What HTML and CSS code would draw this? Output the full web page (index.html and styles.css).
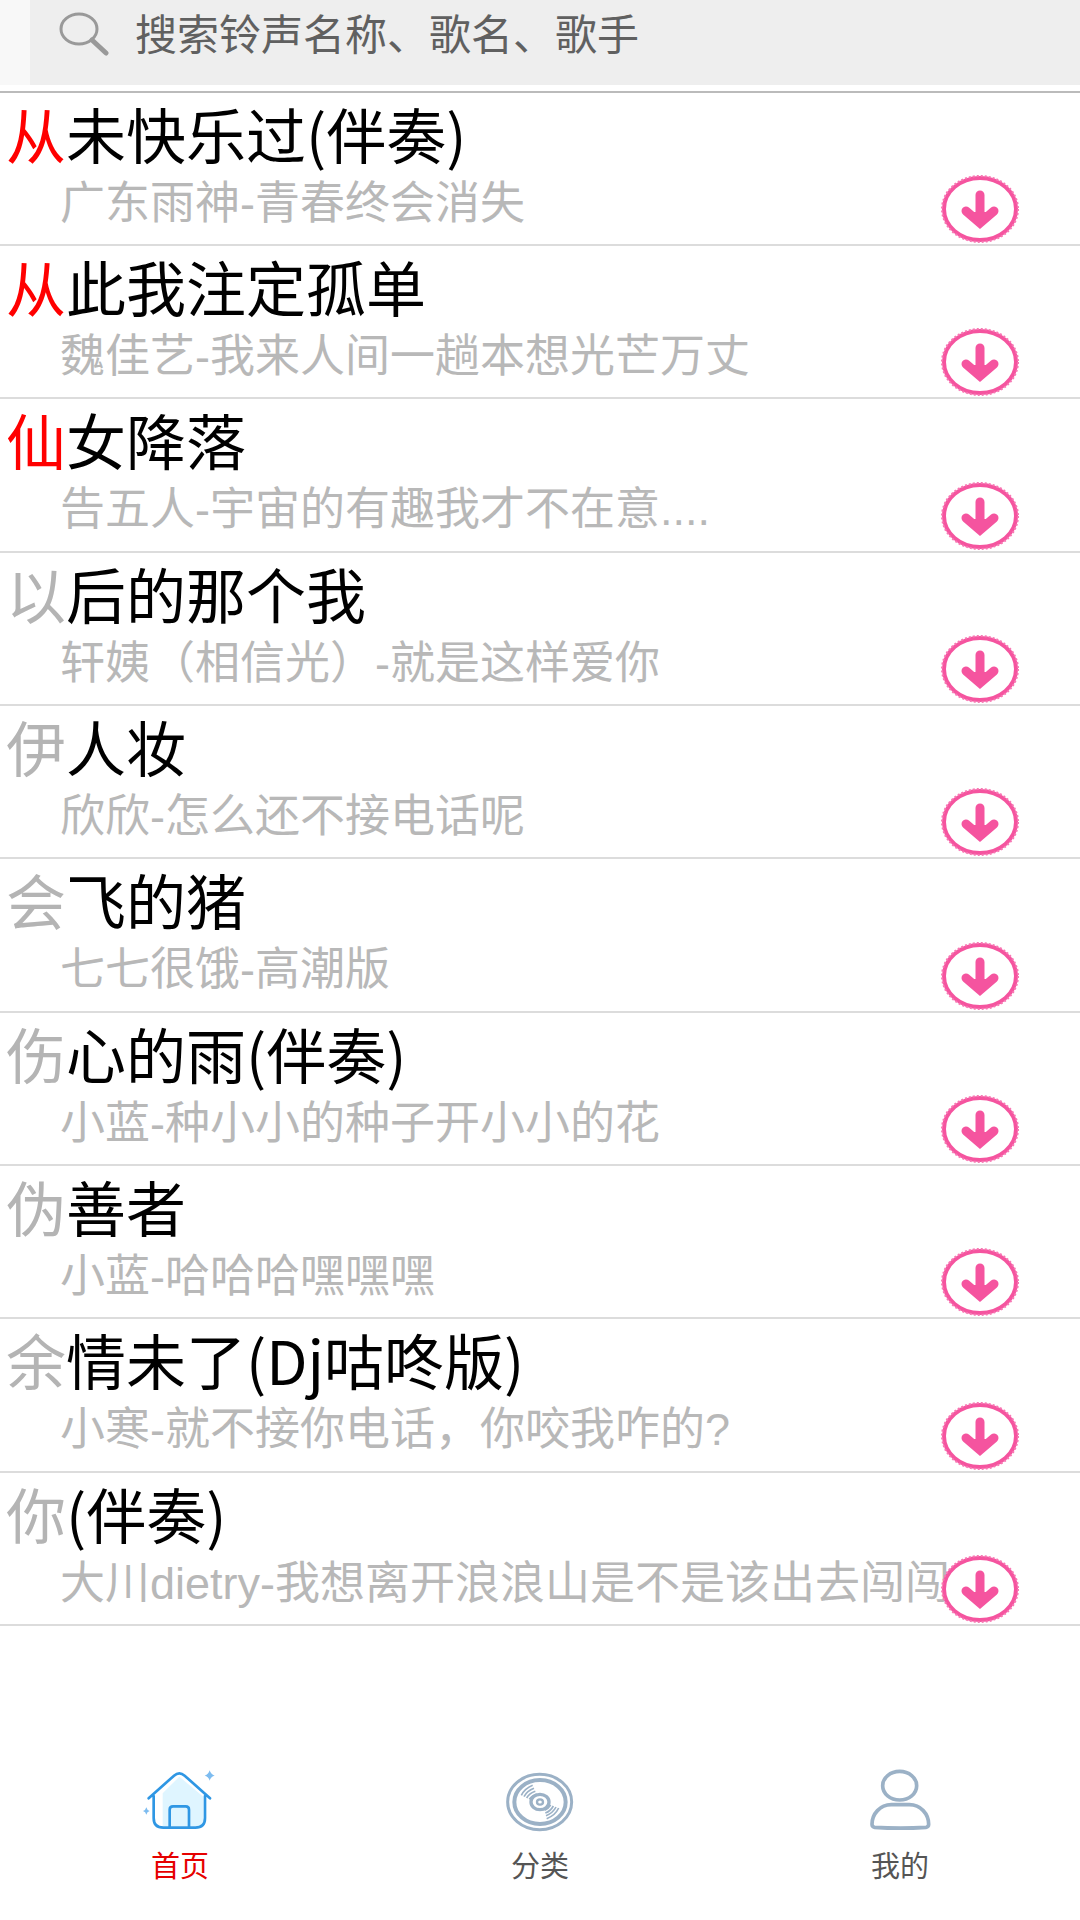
FILE: index.html
```html
<!DOCTYPE html>
<html lang="zh-CN">
<head>
<meta charset="utf-8">
<meta name="viewport" content="width=device-width, initial-scale=1">
<title>铃声</title>
<link rel="stylesheet" href="styles.css">
</head>
<body>
<svg class="defs" aria-hidden="true">
  <symbol id="download" viewBox="0 0 78 68">
    <ellipse cx="39" cy="34" rx="36" ry="31" fill="#fff" stroke="#f5549f" stroke-width="4"/>
    <ellipse cx="39" cy="34" rx="38" ry="33" fill="none" stroke="#f777b3" stroke-width="2" stroke-dasharray="2 2"/>
    <path d="M39 20v27M25 36l14 12 14-12" fill="none" stroke="#f5549f" stroke-width="9" stroke-linecap="round" stroke-linejoin="miter"/>
    <path d="M27 37h24L39 50z" fill="#f5549f"/>
  </symbol>
</svg>
<header class="header">
  <form class="search" role="search">
    <svg class="search-icon" viewBox="0 0 50 46" aria-hidden="true">
      <ellipse cx="20" cy="17" rx="18" ry="15" fill="none" stroke="#999" stroke-width="3"/>
      <path d="M33 28l14 13" stroke="#999" stroke-width="5" stroke-linecap="round"/>
    </svg>
    <input class="search-input" type="text" aria-label="搜索" placeholder="搜索铃声名称、歌名、歌手">
  </form>
</header>
<main>
  <ol class="songs">
    <li class="song"><div class="info"><h2 class="title"><span class="top">从</span>未快乐过(伴奏)</h2><p class="artist">广东雨神-青春终会消失</p></div><button class="download" aria-label="下载"><svg><use href="#download"/></svg></button></li>
    <li class="song"><div class="info"><h2 class="title"><span class="top">从</span>此我注定孤单</h2><p class="artist">魏佳艺-我来人间一趟本想光芒万丈</p></div><button class="download" aria-label="下载"><svg><use href="#download"/></svg></button></li>
    <li class="song"><div class="info"><h2 class="title"><span class="top">仙</span>女降落</h2><p class="artist">告五人-宇宙的有趣我才不在意....</p></div><button class="download" aria-label="下载"><svg><use href="#download"/></svg></button></li>
    <li class="song"><div class="info"><h2 class="title"><span class="rest">以</span>后的那个我</h2><p class="artist">轩姨（相信光）-就是这样爱你</p></div><button class="download" aria-label="下载"><svg><use href="#download"/></svg></button></li>
    <li class="song"><div class="info"><h2 class="title"><span class="rest">伊</span>人妆</h2><p class="artist">欣欣-怎么还不接电话呢</p></div><button class="download" aria-label="下载"><svg><use href="#download"/></svg></button></li>
    <li class="song"><div class="info"><h2 class="title"><span class="rest">会</span>飞的猪</h2><p class="artist">七七很饿-高潮版</p></div><button class="download" aria-label="下载"><svg><use href="#download"/></svg></button></li>
    <li class="song"><div class="info"><h2 class="title"><span class="rest">伤</span>心的雨(伴奏)</h2><p class="artist">小蓝-种小小的种子开小小的花</p></div><button class="download" aria-label="下载"><svg><use href="#download"/></svg></button></li>
    <li class="song"><div class="info"><h2 class="title"><span class="rest">伪</span>善者</h2><p class="artist">小蓝-哈哈哈嘿嘿嘿</p></div><button class="download" aria-label="下载"><svg><use href="#download"/></svg></button></li>
    <li class="song"><div class="info"><h2 class="title"><span class="rest">余</span>情未了(Dj咕咚版)</h2><p class="artist">小寒-就不接你电话，你咬我咋的?</p></div><button class="download" aria-label="下载"><svg><use href="#download"/></svg></button></li>
    <li class="song"><div class="info"><h2 class="title"><span class="rest">你</span>(伴奏)</h2><p class="artist">大川dietry-我想离开浪浪山是不是该出去闯闯</p></div><button class="download" aria-label="下载"><svg><use href="#download"/></svg></button></li>
  </ol>
</main>
<nav class="tabs">
  <a class="tab active" href="#home" aria-current="page">
    <svg class="tab-icon" viewBox="0 0 360 264" aria-hidden="true">
      <path d="M128 130l50-50 72 60v88H128z" fill="#dff5ff"/>
      <path d="M86 145l76-68q16-14 32 0l76 68M101 138v66q0 29 29 29h96q29 0 29-29v-66" fill="none" stroke="#2f97e4" stroke-width="8" stroke-linecap="round" stroke-linejoin="round"/>
      <path d="M149 231v-52q0-10 10-10h38q10 0 10 10v52" fill="none" stroke="#2f97e4" stroke-width="8"/>
      <path d="M269 61q3 12 15 16-12 3-15 15-3-12-15-15 12-4 15-16zM79 172q2 9 10 11-8 2-10 11-2-9-10-11 8-2 10-11z" fill="#7dbcf0"/>
    </svg>
    <span>首页</span>
  </a>
  <a class="tab" href="#category">
    <svg class="tab-icon" viewBox="0 0 360 264" aria-hidden="true">
      <g fill="none" stroke="#9bb1c6">
        <ellipse cx="179" cy="156" rx="96" ry="83" stroke-width="9"/>
        <ellipse cx="180" cy="156" rx="77" ry="66" stroke-width="12"/>
        <ellipse cx="180" cy="156" rx="27" ry="23" stroke-width="10"/>
        <ellipse cx="180" cy="156" rx="9" ry="8" stroke-width="7"/>
        <path d="M124 136q10-20 34-30M132 140q9-17 30-25M140 144q8-14 26-20M148 148q8-12 22-16M236 174q-10 22-36 32M228 171q-9 18-30 26M220 168q-8 15-24 21M212 165q-7 11-18 16" stroke-width="5"/>
      </g>
    </svg>
    <span>分类</span>
  </a>
  <a class="tab" href="#mine">
    <svg class="tab-icon" viewBox="0 0 360 264" aria-hidden="true">
      <g fill="none" stroke="#9bb1c6" stroke-width="11">
        <ellipse cx="179" cy="107" rx="51" ry="43"/>
        <path d="M154 164h54c34 0 58 28 58 59q0 8-8 9-77 5-154 0-8-1-8-9c0-31 24-59 58-59z"/>
      </g>
    </svg>
    <span>我的</span>
  </a>
</nav>
</body>
</html>
```
FILE: styles.css
```css
* {
  box-sizing: border-box;
}

body {
  display: flex;
  flex-direction: column;
  min-height: 100vh;
  margin: 0;
  background: #fff;
  color: #000;
  font-family: "Noto Sans CJK SC", "Noto Sans", sans-serif;
}

.defs {
  position: absolute;
  width: 0;
  height: 0;
}

.header {
  padding-bottom: 6px;
  border-bottom: 2px solid #bbb;
}

.search {
  display: flex;
  align-items: flex-start;
  gap: 26px;
  height: 85px;
  padding: 0 24px 0 29px;
  border-left: 30px solid #f8f8f8;
  background: #eee;
}

.search-icon {
  flex: none;
  width: 50px;
  height: 46px;
  margin-top: 12px;
}

.search-input {
  flex: 1;
  min-width: 0;
  height: 62px;
  padding: 0;
  border: 0;
  outline: 0;
  background: transparent;
  color: #555;
  font: inherit;
  font-size: 42px;
}

.search-input::placeholder {
  color: #606060;
  opacity: 1;
}

.songs {
  margin: 0;
  padding: 0;
  list-style: none;
}

.song {
  display: flex;
  align-items: flex-end;
  height: 153px;
  padding: 0 61px 1px 6px;
  border-bottom: 2px solid #dcdcdc;
}

.song:nth-child(3n) {
  height: 154px;
}

.info {
  flex: 1;
  min-width: 0;
  align-self: flex-start;
  white-space: nowrap;
}

.title {
  margin: 0;
  padding: 2px 0 5px;
  font-size: 60px;
  font-weight: 400;
  line-height: 76px;
}

.top {
  color: #f00;
}

.rest {
  color: #b4b4b4;
}

.artist {
  margin: 0;
  padding-left: 54px;
  color: #b8b8b8;
  font-family: "Liberation Sans", "Noto Sans CJK SC", sans-serif;
  font-size: 45px;
  line-height: 56px;
}

.download {
  flex: none;
  width: 78px;
  height: 68px;
  padding: 0;
  border: 0;
  background: transparent;
}

.download svg {
  display: block;
  width: 78px;
  height: 68px;
}

.tabs {
  display: flex;
  margin-top: auto;
  padding-bottom: 34px;
}

.tab {
  display: flex;
  flex: 1;
  flex-direction: column;
  align-items: center;
  color: #555;
  font-size: 29px;
  line-height: 44px;
  text-decoration: none;
}

.tab-icon {
  width: 120px;
  height: 88px;
  margin-bottom: 4px;
}

.active {
  color: #e60000;
}
```
